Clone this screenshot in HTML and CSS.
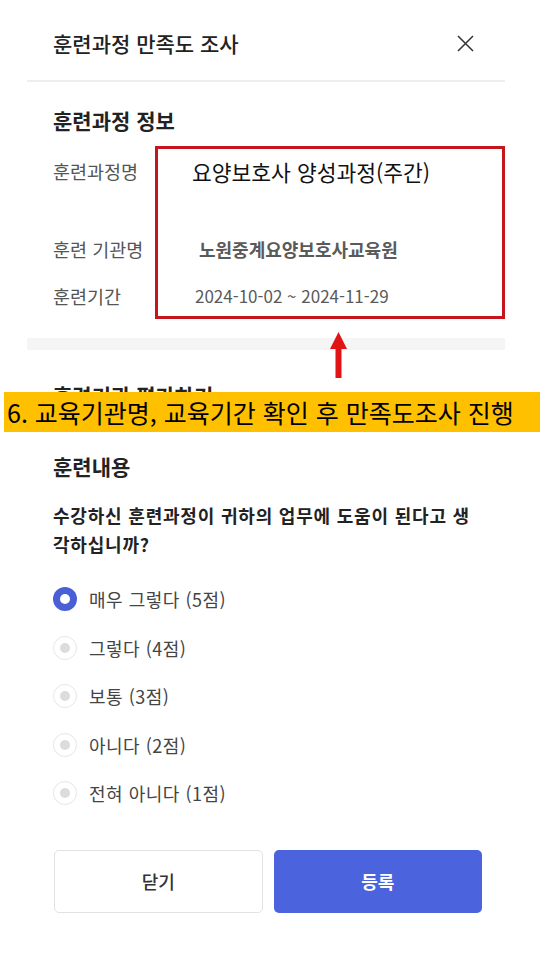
FILE: index.html
```html
<!DOCTYPE html>
<html lang="ko">
<head>
  <meta charset="UTF-8">
  <meta name="viewport" content="width=device-width, initial-scale=1.0">
  <title>훈련과정 만족도 조사</title>
  <link rel="stylesheet" href="styles.css">
</head>
<body>
  <div class="modal">
    <!-- header -->
    <header class="modal-head">
      <h1 class="modal-title">훈련과정 만족도 조사</h1>
      <button class="close-btn" aria-label="닫기">
        <svg width="17" height="17" viewBox="0 0 17 17"><path d="M1 1L16 16M16 1L1 16" stroke="#333" stroke-width="1.5" fill="none"/></svg>
      </button>
    </header>

    <!-- course info -->
    <section class="info">
      <h2 class="section-title">훈련과정 정보</h2>
      <div class="info-grid">
        <div class="mark-box"></div>
        <span class="info-label row-a">훈련과정명</span>
        <span class="info-value value-name row-a">요양보호사 양성과정(주간)</span>
        <span class="info-label row-b">훈련 기관명</span>
        <span class="info-value value-org row-b">노원중계요양보호사교육원</span>
        <span class="info-label row-c">훈련기간</span>
        <span class="info-value value-date row-c">2024-10-02 ~ 2024-11-29</span>
      </div>
    </section>

    <div class="band">
      <svg class="arrow" width="18" height="46" viewBox="0 0 18 46">
        <polygon points="0,17 8.5,0 17,17" fill="#e01414"/>
        <rect x="5.5" y="16" width="6" height="30" fill="#e01414"/>
      </svg>
    </div>

    <!-- survey -->
    <section class="survey">
      <h2 class="section-title">훈련기관 평가하기</h2>
      <div class="banner">6. 교육기관명, 교육기간 확인 후 만족도조사 진행</div>

      <h3 class="section-title sub-title">훈련내용</h3>
      <p class="question">수강하신 훈련과정이 귀하의 업무에 도움이 된다고 생각하십니까?</p>

      <ul class="options">
        <li class="option selected"><span class="radio"></span>매우 그렇다 (5점)</li>
        <li class="option"><span class="radio"></span>그렇다 (4점)</li>
        <li class="option"><span class="radio"></span>보통 (3점)</li>
        <li class="option"><span class="radio"></span>아니다 (2점)</li>
        <li class="option"><span class="radio"></span>전혀 아니다 (1점)</li>
      </ul>
    </section>

    <div class="actions">
      <button class="btn btn-close">닫기</button>
      <button class="btn btn-submit">등록</button>
    </div>
  </div>
</body>
</html>
```

FILE: styles.css
```css
*{
  box-sizing: border-box;
}
body{
  margin: 0;
  background: #fff;
  font-family: "Noto Sans CJK KR", "Noto Sans", sans-serif;
  color: #222;
}
.modal{
  width: 478px;
  margin-left: 27px;
}

/* header */
.modal-head{
  height: 82px;
  padding: 6px 31px 0 26px;
  display: flex;
  align-items: center;
  justify-content: space-between;
  border-bottom: 2px solid #eeeeee;
}
.modal-title{
  margin: 0;
  font-size: 21px;
  font-weight: 500;
  line-height: 28px;
  color: #222;
}
.close-btn{
  border: 0;
  background: none;
  padding: 0;
  width: 17px;
  height: 17px;
  display: flex;
}

.section-title{
  margin: 0;
  font-size: 21px;
  font-weight: 700;
  line-height: 28px;
  color: #222;
}

/* info */
.info{
  padding: 24px 0 0 26px;
}
.info-grid{
  margin-top: 12px;
  display: grid;
  grid-template-columns: 102px 1fr;
  grid-template-rows: 13px 78px 47px 24px 11px;
}
.mark-box{
  grid-column: 2;
  grid-row: 1 / 6;
  border: 3px solid #c4161c;
}
.info-label{
  grid-column: 1;
  font-size: 18.5px;
  line-height: 24px;
  color: #555;
}
.info-value{
  grid-column: 2;
  line-height: 24px;
}
.row-a{ grid-row: 2; }
.row-b{ grid-row: 3; }
.row-c{ grid-row: 4; }
.value-name{
  padding-left: 37px;
  font-size: 21.5px;
  line-height: 26px;
  color: #111;
}
.value-org{
  padding-left: 44px;
  font-size: 18px;
  font-weight: 600;
  color: #5a5a5a;
}
.value-date{
  padding-left: 40px;
  font-size: 17px;
  color: #5a5a5a;
}

.band{
  position: relative;
  margin-top: 19px;
  height: 12px;
  background: #f5f5f5;
}
.arrow{
  position: absolute;
  left: 303px;
  top: -6px;
}

/* survey */
.survey{
  position: relative;
  padding: 31px 25px 0 26px;
}
.banner{
  position: absolute;
  top: 42px;
  left: -23px;
  width: 536px;
  height: 40px;
  padding-left: 3px;
  background: #ffc000;
  color: #000;
  font-size: 25px;
  line-height: 40px;
  white-space: nowrap;
}
.sub-title{
  margin-top: 43px;
}
.question{
  margin: 21px 0 0;
  font-size: 18px;
  font-weight: 600;
  line-height: 29px;
  letter-spacing: 0.8px;
  color: #222;
}
.options{
  list-style: none;
  margin: 16px 0 0;
  padding: 0;
}
.option{
  height: 48.5px;
  display: flex;
  align-items: center;
  gap: 12px;
  font-size: 18px;
  letter-spacing: 0.5px;
  color: #444;
}
.radio{
  width: 24px;
  height: 24px;
  border-radius: 50%;
  border: 1.5px solid #e6e6e6;
  background: #fff;
  display: flex;
  align-items: center;
  justify-content: center;
}
.radio::after{
  content: "";
  width: 10px;
  height: 10px;
  border-radius: 50%;
  background: #dcdcdc;
}
.option.selected .radio{
  border: 0;
  background: #4a5fd6;
}
.option.selected .radio::after{
  background: #fff;
}

/* buttons */
.actions{
  margin: 32px 0 0 27px;
  width: 428px;
  display: grid;
  grid-template-columns: 1fr 1fr;
  gap: 11px;
}
.btn{
  height: 63px;
  border-radius: 5px;
  font-family: inherit;
  font-size: 18px;
}
.btn-close{
  background: #fff;
  border: 1.5px solid #e2e2e2;
  color: #333;
  font-weight: 500;
}
.btn-submit{
  background: #4b63dd;
  border: 0;
  color: #fff;
  font-weight: 600;
}
```
